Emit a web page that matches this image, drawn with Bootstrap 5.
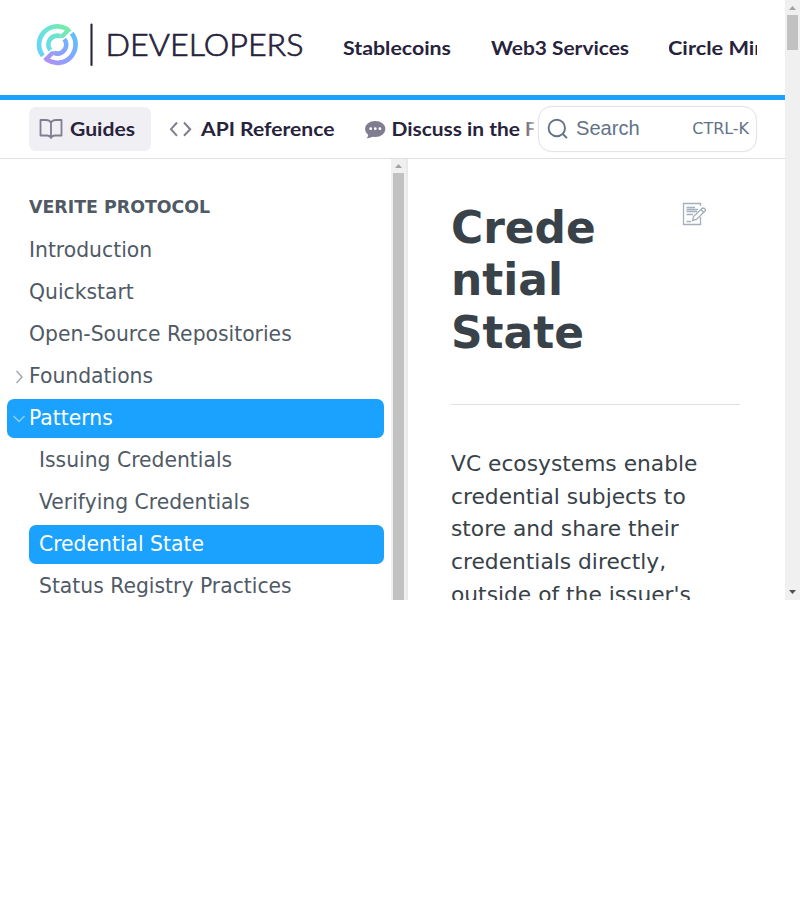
<!DOCTYPE html>
<html lang="en">
<head>
<meta charset="utf-8">
<meta name="viewport" content="width=device-width, initial-scale=1">
<title>Credential State</title>
<link href="https://cdn.jsdelivr.net/npm/bootstrap@5.3.0/dist/css/bootstrap.min.css" rel="stylesheet">
<style>
body{font-family:"DejaVu Sans",sans-serif;color:#384248;overflow:hidden}
svg{display:block;flex:none}
.screen{width:800px;height:600px}
.page{width:785px}
.topbar{height:100px;border-bottom:5px solid #1ba2ff;padding:0 28px 0 36px}
.brand-art{width:270px;height:54px;margin-top:-8px}
.toplinks{margin-left:36.5px;width:414.5px;gap:39.5px;font:700 20px/30px Lato,sans-serif;color:#28233c}
.toplinks text,.subnav text{font:700 19.6px Lato,sans-serif;fill:#28233c}
.subnav{height:59px;border-bottom:1px solid #e0e0e0;padding:0 28px 0 29px}
.pill{height:44px;width:122px;border-radius:7px;background:#f0eff4;padding-left:10px}
.search{width:219px;height:46px;border:1.5px solid #e3e4e6;border-radius:14px;padding:0 7px 0 8px;color:#637288;box-shadow:0 0 1px #ddd}
.search .label{font:20.1px/30px "Liberation Sans",sans-serif;margin-left:7px;margin-top:-2px}
.search .hint{font-size:16px;letter-spacing:-.05px;color:#637288}
.main-area{height:441px}
.side{width:391px;padding:27px 7px 0 7px;color:#4f5a66}
.side h2{font-size:17.4px;font-weight:700;line-height:42px;margin:0 0 3px 22px}
.item{height:39px;margin-bottom:3px;font-size:20.33px;line-height:38px;border-radius:7px;white-space:nowrap;padding-left:22px}
.item.arrow{padding-left:6px;line-height:37px}
.item.arrow svg{margin-right:4px;width:12px;margin-top:1px}
.item.sub{margin-left:22px;padding-left:10px}
.item.on{background:#1ba2ff;color:#fff}
.track{background:#f0f0f0;width:15px}
.thumb{background:#c1c1c1;width:11px}
.side-edge{width:2px;background:#e9e9e9}
.article{padding:43px 44px 0 43px}
.article h1{font-size:43.9px;font-weight:700;line-height:52.4px;width:165px;margin:0}
.article p{font-size:21.78px;line-height:32.7px;margin:0;white-space:nowrap}
.article svg{margin-right:35px}
.rule{height:1px;background:#dfe1e3;margin:44.8px 1px 43px 0}
</style>
<script src="https://cdn.jsdelivr.net/npm/bootstrap@5.3.0/dist/js/bootstrap.bundle.min.js"></script>
</head>
<body>
<div class="screen d-flex overflow-hidden">
<div class="page flex-shrink-0">
<header class="topbar d-flex align-items-center">
 <svg class="brand-art" viewBox="36 17 270 54">
  <defs>
   <linearGradient id="ga" gradientUnits="userSpaceOnUse" x1="40" y1="56" x2="68" y2="28"><stop offset="0" stop-color="#68d0ff"/><stop offset=".5" stop-color="#68e2dc"/><stop offset="1" stop-color="#78eaa8"/></linearGradient>
   <linearGradient id="gb" gradientUnits="userSpaceOnUse" x1="46" y1="61" x2="74" y2="34"><stop offset="0" stop-color="#b090f5"/><stop offset=".5" stop-color="#85a5ff"/><stop offset="1" stop-color="#5fc0ff"/></linearGradient>
  </defs>
  <g fill="none" stroke-width="4.7">
   <path stroke="url(#ga)" d="M42.900 55.900A18.300 18.300 0 0 1 67 29.100"/>
   <path stroke="url(#ga)" d="M50.300 50.100A8.900 8.900 0 0 1 60.300 36.200"/>
   <path stroke="url(#gb)" d="M71.700 33.300A18.300 18.300 0 0 1 47.600 60.100"/>
   <path stroke="url(#gb)" d="M64.300 39.100A8.900 8.900 0 0 1 54.300 53"/>
  </g>
  <path fill="url(#ga)" d="M68.200 27L71.400 30.200L63.800 37.800L59.600 38.200L61 34.200L62.200 33.200L65.500 30Z"/>
  <path fill="url(#gb)" d="M46.400 62.200L43.200 59L50.800 51.400L55 51L53.600 55L52.400 56L49.100 59.200Z"/>
  <path d="M91.500 24.500V65" stroke="#28233c" stroke-width="2.1" stroke-linecap="round"/>
  <text x="105.500" y="55.500" textLength="198" lengthAdjust="spacingAndGlyphs" font-family="Lato,sans-serif" font-weight="300" font-size="30.500" fill="#28233c" stroke="#28233c" stroke-width=".7">DEVELOPERS</text>
 </svg>
 <nav class="toplinks d-flex overflow-hidden">
  <svg width="109" height="30"><text x="0" y="22" textLength="108" lengthAdjust="spacingAndGlyphs">Stablecoins</text></svg>
  <svg width="138" height="30"><text x="0" y="22" textLength="138" lengthAdjust="spacingAndGlyphs">Web3 Services</text></svg>
  <svg width="110" height="30"><text x="-1" y="22" textLength="106.500" lengthAdjust="spacingAndGlyphs">Circle Mint</text></svg>
 </nav>
</header>
<div class="subnav d-flex align-items-center">
 <div class="pill d-flex align-items-center flex-shrink-0">
  <svg width="24" height="22" viewBox="0 0 24 22" fill="none" stroke="#817d91" stroke-width="1.8" stroke-linejoin="round"><path d="M12 5Q11 2 7 2H1.500V17.500H8Q11 17.500 12 20Q13 17.500 16 17.500H22.500V2H17Q13 2 12 5ZM12 5V20"/></svg>
  <svg class="ms-1" width="76" height="30"><text x="3" y="22" textLength="65" lengthAdjust="spacingAndGlyphs">Guides</text></svg>
 </div>
 <svg width="387" height="44" viewBox="151 107 387 44" class="overflow-hidden">
  <defs><linearGradient id="fade" gradientUnits="userSpaceOnUse" x1="520" y1="0" x2="540" y2="0"><stop offset="0" stop-color="#28233c"/><stop offset="1" stop-color="#28233c" stop-opacity="0"/></linearGradient>
  <clipPath id="end"><path d="M360 100H534V155H360Z"/></clipPath></defs>
  <path d="M177 122.500L171 129.200L177 135.800M184 122.500L190.200 129.200L184 135.800" fill="none" stroke="#817d91" stroke-width="2"/>
  <text x="201" y="136.400" textLength="133.500" lengthAdjust="spacingAndGlyphs">API Reference</text>
  <ellipse cx="375.200" cy="129" rx="10.200" ry="8" fill="#817d91"/><path d="M368 132Q369 136 366.500 138.300Q372 138 375 135Z" fill="#817d91"/>
  <g fill="#fff"><circle cx="370.700" cy="128.700" r="1.400"/><circle cx="375.300" cy="128.700" r="1.400"/><circle cx="379.900" cy="128.700" r="1.400"/></g>
  <text x="391.500" y="136.400" textLength="128.500" lengthAdjust="spacingAndGlyphs">Discuss in the</text>
  <text x="525" y="136.400" style="fill:url(#fade)" clip-path="url(#end)">Forum</text>
 </svg>
 <div class="search d-flex align-items-center flex-shrink-0">
  <svg width="22" height="22" viewBox="0 0 22 22" fill="none" stroke="#637288" stroke-width="1.900"><circle cx="9.800" cy="10" r="8.200"/><path d="M15.800 16L20 20.200"/></svg>
  <span class="label">Search</span><span class="hint ms-auto">CTRL-K</span>
 </div>
</div>
<div class="main-area d-flex overflow-hidden">
 <aside class="side flex-shrink-0">
  <h2>VERITE PROTOCOL</h2>
  <div class="item">Introduction</div>
  <div class="item">Quickstart</div>
  <div class="item">Open-Source Repositories</div>
  <div class="item arrow d-flex align-items-center"><svg height="14" viewBox="0 0 12 14" fill="none" stroke="#a5abb2" stroke-width="1.500"><path d="M3.500 1L9 7L3.500 13"/></svg>Foundations</div>
  <div class="item arrow on d-flex align-items-center"><svg height="14" viewBox="0 0 12 14" fill="none" stroke="#8dd0ff" stroke-width="1.500"><path d="M.5 4L6 9.500L11.500 4"/></svg>Patterns</div>
  <div class="item sub">Issuing Credentials</div>
  <div class="item sub">Verifying Credentials</div>
  <div class="item sub on">Credential State</div>
  <div class="item sub">Status Registry Practices</div>
 </aside>
 <div class="track flex-shrink-0 d-flex flex-column align-items-center">
  <svg width="15" height="14"><path d="M4 9L7.500 5L11 9Z" fill="#a3a3a3"/></svg><div class="thumb flex-grow-1"></div>
 </div>
 <div class="side-edge flex-shrink-0"></div>
 <main class="article flex-grow-1">
  <div class="d-flex justify-content-between">
   <h1>Crede<br>ntial<br>State</h1>
   <svg width="24" height="24" viewBox="682 202 24 24" fill="none" stroke="#a5afbd" stroke-width="1.300"><path d="M700.500 206V203.500H683.500V224.500H700.500V217M686.500 207.500H695M686.500 209.500H698M686.500 211.500H697M686.500 214.500H693M686.500 221.500H691M692.500 220.500L693.500 216.500L702.500 208Q705.500 208 705.500 210.500L696.500 219.500ZM701 209.500L704 212.500"/></svg>
  </div>
  <div class="rule"></div>
  <p>VC ecosystems enable<br>credential subjects to<br>store and share their<br>credentials directly,<br>outside of the issuer's</p>
 </main>
</div>
</div>
<div class="track flex-shrink-0 d-flex flex-column align-items-center">
 <svg width="15" height="15"><path d="M4 10L7.500 6L11 10Z" fill="#a3a3a3"/></svg>
 <div class="thumb" style="height:35px"></div>
 <svg class="mt-auto" width="15" height="15"><path d="M4 5L7.500 9L11 5Z" fill="#505050"/></svg>
</div>
</div>
</body>
</html>
